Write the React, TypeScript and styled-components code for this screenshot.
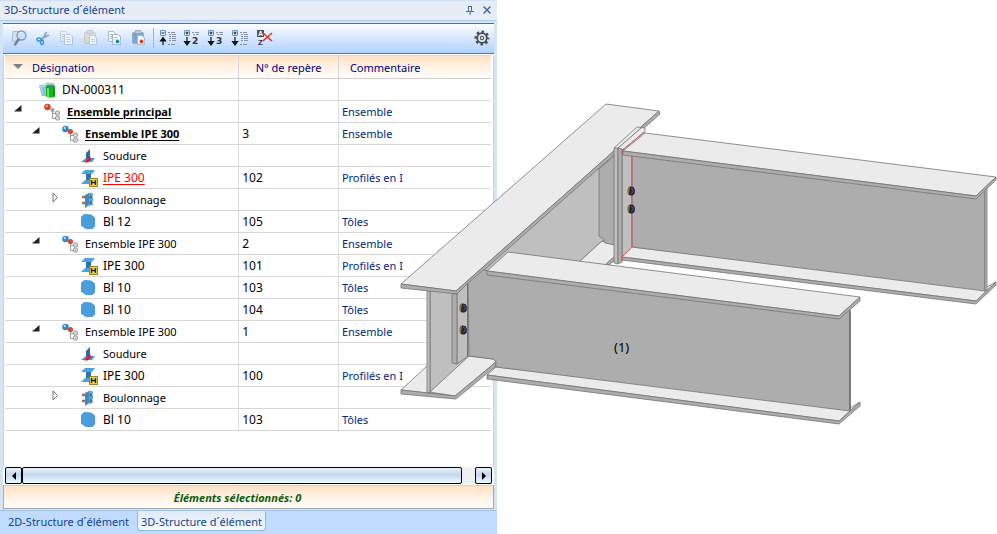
import React from "react";
import styled, { createGlobalStyle } from "styled-components";

const GlobalStyle = createGlobalStyle`
  * { box-sizing: border-box; }
  body {
    margin: 0;
    background: #fff;
    font-family: "Noto Sans", "Open Sans", sans-serif;
    font-size: 11px;
    line-height: 16px;
    color: #000;
  }
  button { font: inherit; padding: 0; margin: 0; border: 0; background: none; color: inherit; }
  svg { display: block; }
`;

const Page = styled.main`
  display: grid;
  grid-template-columns: minmax(0, 497fr) minmax(0, 500fr);
  min-height: 100vh;
`;

const Dock = styled.section`
  display: flex;
  flex-direction: column;
  background: #bfdbff;
`;

const Panel = styled.div`
  flex: 1;
  display: flex;
  flex-direction: column;
  background: #d5e4f5;
  border-bottom: 1px solid #a3c3e8;
  padding-bottom: 1px;
`;

const TitleBar = styled.header`
  display: flex;
  align-items: center;
  gap: 7px;
  height: 21px;
  padding: 0 5px 1px 4px;
  background: #e6edf6;
  border-top: 1px solid #cfe0f5;
  border-bottom: 1px solid #aecbee;
`;

const Title = styled.h1`
  flex: 1;
  margin: 0;
  font: inherit;
  color: #15428b;
`;

const Frame = styled.div`
  flex: 1;
  display: flex;
  flex-direction: column;
  margin: 2px 3px 0;
  background: #fff;
`;

const Toolbar = styled.div`
  display: flex;
  align-items: center;
  height: 31px;
  padding: 0 0 2px 4px;
  border-top: 1px solid #6b6b6b;
  border-bottom: 1px solid #3d7fb5;
  background: linear-gradient(#fbfdff, #d6e7ff 50%, #b0d2ff);
`;

const ToolButton = styled.button<{ $last?: boolean; $faded?: boolean }>`
  display: grid;
  place-items: center;
  width: 24px;
  height: 24px;
  margin-left: ${(p) => (p.$last ? "auto" : "0")};
  opacity: ${(p) => (p.$faded ? 0.6 : 1)};
`;

const Separator = styled.span`
  width: 1px;
  height: 20px;
  margin: 0 2px;
  background: #9db4d4;
`;

const TreeArea = styled.div`
  flex: 1;
  margin-top: 1px;
  padding: 0 2px 0 1px;
  border-left: 1px solid #b9d7f0;
  border-right: 1px solid #b9d7f0;
`;

const Tree = styled.table`
  width: 100%;
  border-collapse: separate;
  border-spacing: 0;
  table-layout: fixed;
`;

const HeadCell = styled.th<{ $inset?: number }>`
  height: 24px;
  padding: 1px 0 0 ${(p) => p.$inset ?? 0}px;
  font-weight: 400;
  text-align: ${(p) => (p.$inset ? "left" : "center")};
  color: #00007b;
  background: linear-gradient(#ffe1c4, #fff3e6 55%, #fffdfa);
  border-top: 1px solid #d8d8d8;
  border-bottom: 1px solid #d0d0d0;
  &:not(:last-child) { border-right: 1px solid #d8d8d8; }
`;

const HeadLabel = styled.span`
  display: flex;
  align-items: center;
  gap: 9px;
`;

const Cell = styled.td<{ $navy?: boolean; $mark?: boolean }>`
  height: 22px;
  padding: 1px 0 0 3px;
  white-space: nowrap;
  font-size: ${(p) => (p.$mark ? "12px" : "11px")};
  color: ${(p) => (p.$navy ? "#00287b" : "#000")};
  border-bottom: 1px solid #d6d6d6;
  &:not(:last-child) { border-right: 1px solid #dcdcdc; }
`;

const Node = styled.div<{ $indent: number }>`
  display: flex;
  align-items: center;
  padding-left: ${(p) => p.$indent}px;
`;

const ToggleSlot = styled.span`
  width: 30px;
  height: 20px;
`;

const Toggle = styled.button`
  display: block;
  width: 10px;
  height: 16px;
`;

const IconSlot = styled.span`
  width: 23px;
`;

type Tone = "plain" | "strong" | "alert";
const NodeName = styled.span<{ $tone: Tone; $code: boolean }>`
  font-family: ${(p) => (p.$tone === "strong" ? '"Open Sans"' : '"Noto Sans"')}, sans-serif;
  font-size: ${(p) => (p.$code ? "12px" : "11px")};
  font-weight: ${(p) => (p.$tone === "strong" ? 700 : 400)};
  color: ${(p) => (p.$tone === "alert" ? "#f00" : "inherit")};
  text-decoration: ${(p) => (p.$tone === "plain" ? "none" : "underline")};
  text-underline-offset: 2px;
`;

const ScrollBar = styled.div`
  display: flex;
  height: 17px;
  margin: 0 2px 1px;
  background: #efefef;
`;

const ScrollPart = styled.button`
  display: grid;
  place-items: center;
  flex: 0 0 17px;
  height: 17px;
  border: 1px solid #000;
  border-radius: 2px;
  background: linear-gradient(#e9f1fb, #c3d6ee 45%, #dcebfa 75%, #e9fbff);
`;

const ScrollThumb = styled(ScrollPart)`
  flex: 1;
  margin-right: 13px;
`;

const Status = styled.footer`
  height: 24px;
  padding: 4px 22px 0 0;
  border: 1px solid #a8a8a8;
  border-top-color: #b5d6ea;
  background: linear-gradient(#ffe1c4, #fff3e6 55%, #fffdfa);
  font-family: "Open Sans", sans-serif;
  font-weight: 700;
  font-style: italic;
  text-align: center;
  color: #0a5c0a;
`;

const Tabs = styled.nav`
  display: flex;
  align-items: flex-start;
  gap: 4px;
  height: 23px;
  padding-left: 4px;
`;

const Tab = styled.button<{ $active?: boolean }>`
  height: 20px;
  padding: 2px 3px 0;
  color: #15428b;
  white-space: nowrap;
  border: 1px solid ${(p) => (p.$active ? "#8fb8e8" : "transparent")};
  border-top: 0;
  border-radius: 0 0 4px 4px;
  background: ${(p) => (p.$active ? "linear-gradient(#dfeaf7, #f6faff)" : "none")};
`;

const Viewer = styled.section`
  position: relative;
`;

const Model = styled.svg`
  position: absolute;
  top: 0;
  right: 0;
  width: 119.4%;
  height: auto;
  pointer-events: none;
  font-size: 13px;
`;

const Svg = ({ w = 18, h = 18, children }: { w?: number; h?: number; children: React.ReactNode }) => (
  <svg width={w} height={h} viewBox={`0 0 ${w} ${h}`} aria-hidden="true">{children}</svg>
);

/* Toolbar icons */

const FindIcon = () => (
  <Svg>
    <path d="M3 2.500h6.500v8.500L2 12.500z" fill="#d3e0f2" stroke="#a9bbd4" />
    <circle cx="11.500" cy="6.500" r="4.500" fill="#c4dcf8" fillOpacity=".85" stroke="#8298ba" strokeWidth="1.300" />
    <path d="M9 5.500a3 3 0 0 1 3-2.500" fill="none" stroke="#fff" />
    <path d="M8.500 10.500L5 15.500" stroke="#74829c" strokeWidth="2.600" strokeLinecap="round" />
  </Svg>
);

const CutIcon = () => (
  <Svg>
    <path d="M12.500 3L7.500 12M15 6L6 10.500" stroke="#8fa6bd" strokeWidth="1.800" />
    <ellipse cx="5" cy="10.500" rx="2" ry="1.500" fill="none" stroke="#3d9ad6" strokeWidth="1.600" />
    <ellipse cx="8" cy="13.500" rx="1.500" ry="2" fill="none" stroke="#3d9ad6" strokeWidth="1.600" />
  </Svg>
);

const Sheets = () => (
  <>
    <path d="M2.500 2.500h5l2 2v8h-7z" fill="#f3f8fd" stroke="#a9bbd0" />
    <path d="M6.500 5.500h5.500l2.500 2.500v7.500h-8z" fill="#fff" stroke="#9db0c6" />
    <path d="M8.500 8.500h3M8.500 10.500h4M8.500 12.500h4M4 5.500h2M4 7.500h2M4 9.500h2" stroke="#a3b7cd" />
  </>
);
const CopyIcon = () => <Svg><Sheets /></Svg>;
const CopySpecialIcon = () => (
  <Svg><Sheets /><circle cx="11.500" cy="12.500" r="2.500" fill="#1e8fc4" stroke="#fff" /></Svg>
);

const Board = ({ back }: { back: string }) => (
  <>
    <rect x="2.500" y="3.500" width="11" height="11" rx="1" fill={back} stroke="#8d9db3" strokeOpacity=".6" />
    <rect x="5" y="1.500" width="6" height="3" rx="1" fill="#c4cbd3" stroke="#8e98a5" strokeWidth=".7" />
    <path d="M7.500 6.500h4.500l2.500 2.500v6.500h-7z" fill="#fff" stroke="#a5b4c6" />
  </>
);
const PasteIcon = () => (
  <Svg><Board back="#e2d2ab" /><path d="M9 10.500h4M9 12.500h4" stroke="#b9c4d2" /></Svg>
);
const PasteSpecialIcon = () => (
  <Svg><Board back="#72a6da" /><circle cx="11.500" cy="12.500" r="2.500" fill="#d8401f" stroke="#fff" /></Svg>
);

const LevelIcon = ({ sign, up, level }: { sign: "+" | "-"; up?: boolean; level?: string }) => (
  <Svg>
    <rect x="1.500" y="1.500" width="5" height="5" rx=".5" fill="#eaf5ff" stroke="#5795cf" />
    <path d={sign === "+" ? "M2.500 4h3M4 2.500v3" : "M2.500 4h3"} stroke="#111" />
    {up ? (
      <path d="M4 16v-5M1.500 12L4 8.500 6.500 12z" stroke="#111" fill="#111" strokeWidth="1.200" />
    ) : (
      <path d="M4 8v5M1.500 12.500L4 16l2.500-3.500z" stroke="#111" fill="#111" strokeWidth="1.200" />
    )}
    <path
      d={level ? "M9 3.500h2M10 5.500h2M12 3.500h4M13 5.500h3" : "M9 3.500h2M12 3.500h4M10 5.500h2M13 5.500h4M10 7.500h2M13 7.500h4M10 9.500h2M13 9.500h4M10 11.500h2M13 11.500h4M9 15.500h2M12 15.500h4"}
      stroke="#8194aa"
    />
    {level && (
      <text x="9" y="15" fontSize="9" fontWeight="700" fontFamily="DejaVu Sans, sans-serif" fill="#333">{level}</text>
    )}
  </Svg>
);

const SortClearIcon = () => (
  <Svg>
    <rect x="2" y="1" width="7" height="7" fill="#505050" />
    <text x="3" y="7" fontSize="7" fontWeight="700" fontFamily="Liberation Sans, sans-serif" fill="#fff">A</text>
    <text x="3" y="16" fontSize="8" fontWeight="700" fontFamily="Liberation Sans, sans-serif" fill="#333">Z</text>
    <path d="M8 4l9 8M17 4l-9 8" stroke="#d63a2a" strokeWidth="1.600" />
  </Svg>
);

const GearIcon = () => (
  <Svg>
    <circle cx="9" cy="9" r="6.300" fill="none" stroke="#4a4a4a" strokeWidth="2.400" strokeDasharray="2.470 2.478" strokeDashoffset="1.230" />
    <circle cx="9" cy="9" r="4.800" fill="#dbe9fb" stroke="#4a4a4a" strokeWidth="1.800" />
    <circle cx="9" cy="9" r="1.600" fill="#fff" stroke="#5a5a5a" strokeWidth="1.200" />
  </Svg>
);

/* Tree icons */

const ProjectIcon = () => (
  <Svg>
    <path d="M.5 4.500l5-.5 2-2 7 .5v12H3z" fill="#b9dcee" stroke="#7fb4cf" strokeWidth=".8" />
    <path d="M2.500 6l9-1v10H4z" fill="#8dc0da" />
    <path d="M7 5.500v9.500c0 2 9 2 9 0V5.500z" fill="#14b81a" />
    <path d="M9 7v9" stroke="#7ff07c" strokeWidth="1.500" />
    <path d="M15 6.500v9" stroke="#0b8b12" strokeWidth="1.500" />
    <ellipse cx="11.500" cy="5.500" rx="4.500" ry="1.500" fill="#3a9e55" stroke="#128d18" strokeWidth=".6" />
  </Svg>
);

const Branch = () => (
  <>
    <path d="M8.500 8v7.500H12M8.500 10.500H12" fill="none" stroke="#9a9a9a" />
    <circle cx="13.500" cy="10" r="2.200" fill="#d7d7d7" stroke="#939393" strokeWidth=".9" />
    <circle cx="13.500" cy="15" r="2.200" fill="#d7d7d7" stroke="#939393" strokeWidth=".9" />
  </>
);
const MainAssemblyIcon = () => (
  <Svg>
    <Branch />
    <circle cx="3.500" cy="4" r="3.300" fill="#cf4732" />
    <circle cx="2.800" cy="3" r="1.200" fill="#eda08f" />
    <circle cx="8.500" cy="7" r="2" fill="#9b9b9b" />
  </Svg>
);
const AssemblyIcon = () => (
  <Svg>
    <Branch />
    <circle cx="3.500" cy="4" r="3.300" fill="#2f87c8" />
    <circle cx="2.800" cy="3" r="1.200" fill="#a8d6f4" />
    <circle cx="8.500" cy="6.500" r="2.600" fill="#d14d38" />
  </Svg>
);
const WeldIcon = () => (
  <Svg>
    <path d="M1 15l5-4h9l-3 4z" fill="#4695d3" />
    <path d="M6 12V6l4-4v9z" fill="#2b6ca5" />
    <path d="M10 8.500l1 4L7.500 15.500H4.500z" fill="#e5182b" />
  </Svg>
);
const ProfileIcon = () => (
  <Svg>
    <path d="M6 4h5v9H6z" fill="#2d71aa" />
    <path d="M1 5l4-4h10l-3 4z" fill="#4da3dd" />
    <path d="M1 15l4-4h8l-2 4z" fill="#4da3dd" />
    <rect x="9.500" y="9.500" width="8" height="8" fill="#f3cf32" stroke="#9b832a" />
    <path d="M11.500 11v5M15.500 11v5M11.500 13.500h4" stroke="#222" strokeWidth="1.300" />
  </Svg>
);
const BoltIcon = () => (
  <Svg>
    <path d="M2 6h3M2 12h3" stroke="#a36f5d" strokeWidth="2.600" />
    <path d="M5 4l4-2v12l-4 3z" fill="#3c88c4" />
    <path d="M9 1.500l4 1v11l-4 2z" fill="#5aa6dc" />
    <path d="M10 6h2M10 11.500h2" stroke="#3c5268" strokeWidth="2" />
    <circle cx="12.500" cy="5.500" r=".8" fill="#e5edf4" />
    <circle cx="12.500" cy="11" r=".8" fill="#e5edf4" />
  </Svg>
);
const PlateIcon = () => (
  <Svg>
    <path d="M4 1.500l7 .5 3.500 2.500v9L12.500 15.500H6l-4.500-3V4z" fill="#4a9cda" stroke="#4a9cda" strokeLinejoin="round" />
  </Svg>
);

const OpenMark = () => (
  <Svg w={10} h={16}><path d="M0 9.500h7.500V3z" fill="#222" /></Svg>
);
const ClosedMark = () => (
  <Svg w={10} h={16}><path d="M3 3l4.500 4.500L3 12z" fill="#fff" stroke="#777" /></Svg>
);

type Kind = "project" | "main" | "assembly" | "weld" | "profile" | "bolt" | "plate";
const icons: Record<Kind, () => React.JSX.Element> = {
  project: ProjectIcon,
  main: MainAssemblyIcon,
  assembly: AssemblyIcon,
  weld: WeldIcon,
  profile: ProfileIcon,
  bolt: BoltIcon,
  plate: PlateIcon,
};

const indents: Record<Kind, number> = { project: 1, main: 6, assembly: 24, weld: 42, profile: 42, bolt: 42, plate: 42 };
const codeKinds: Kind[] = ["project", "profile", "plate"];

interface Row {
  kind: Kind;
  name: string;
  mark?: string;
  note?: string;
  tone?: Tone;
}

const rows: Row[] = [
  { kind: "project", name: "DN-000311" },
  { kind: "main", name: "Ensemble principal", note: "Ensemble", tone: "strong" },
  { kind: "assembly", name: "Ensemble IPE 300", mark: "3", note: "Ensemble", tone: "strong" },
  { kind: "weld", name: "Soudure" },
  { kind: "profile", name: "IPE 300", mark: "102", note: "Profilés en I", tone: "alert" },
  { kind: "bolt", name: "Boulonnage" },
  { kind: "plate", name: "Bl 12", mark: "105", note: "Tôles" },
  { kind: "assembly", name: "Ensemble IPE 300", mark: "2", note: "Ensemble" },
  { kind: "profile", name: "IPE 300", mark: "101", note: "Profilés en I" },
  { kind: "plate", name: "Bl 10", mark: "103", note: "Tôles" },
  { kind: "plate", name: "Bl 10", mark: "104", note: "Tôles" },
  { kind: "assembly", name: "Ensemble IPE 300", mark: "1", note: "Ensemble" },
  { kind: "weld", name: "Soudure" },
  { kind: "profile", name: "IPE 300", mark: "100", note: "Profilés en I" },
  { kind: "bolt", name: "Boulonnage" },
  { kind: "plate", name: "Bl 10", mark: "103", note: "Tôles" },
];

const TreeRow = ({ row }: { row: Row }) => {
  const Icon = icons[row.kind];
  const open = row.kind === "main" || row.kind === "assembly";
  return (
    <tr>
      <Cell>
        <Node $indent={indents[row.kind]}>
          <ToggleSlot>
            {(open || row.kind === "bolt") && (
              <Toggle aria-label={open ? "Réduire" : "Développer"} aria-expanded={open}>
                {open ? <OpenMark /> : <ClosedMark />}
              </Toggle>
            )}
          </ToggleSlot>
          <IconSlot><Icon /></IconSlot>
          <NodeName $tone={row.tone ?? "plain"} $code={codeKinds.includes(row.kind)}>{row.name}</NodeName>
        </Node>
      </Cell>
      <Cell $mark>{row.mark}</Cell>
      <Cell $navy>{row.note}</Cell>
    </tr>
  );
};

/* Beam model */

const LIGHT = "#ebebeb";
const MID = "#bfbfbf";
const DARK = "#adadad";
const EDGE = "#adadad";

const Face = ({ p, fill }: { p: string; fill: string }) => (
  <polygon points={p} fill={fill} stroke="#757575" strokeWidth=".8" strokeLinejoin="round" />
);

const Bolt = ({ x, y }: { x: number; y: number }) => (
  <g transform={`translate(${x} ${y})`}>
    <ellipse cx="-1" cy="0" rx="2.600" ry="4.600" fill="#857432" />
    <path d="M-1-4.500l3.500.5 1.500 3-.5 4-2.500 1.800-3-1z" fill="#27213e" />
    <path d="M0-2.500l2 .5v3l-2 1.500" fill="none" stroke="#5b5280" />
  </g>
);

const BeamModel = () => (
  <Model viewBox="400 0 597 534" role="img" aria-label="Modèle 3D de l'ensemble">
    <Face fill={LIGHT} p="401,390 427,366 440,366 469,356 493,359 496,362 455,396" />
    <Face fill={MID} p="430,291 615,151 615,245 602,241 579,262 430,392" />
    <Face fill={MID} p="427,291 430,291 430,393 427,392" />
    <Face fill={LIGHT} p="430,392 469,356 493,359 496,362 455,396" />
    <Face fill={EDGE} p="401,390 455,396 496,362 496,366 456,399 401,394" />
    <Face fill={LIGHT} p="602,241 615,245 615,256 605,265 579,262" />
    <Face fill={EDGE} p="605,265 615,256 615,260 609,265" />
    <Face fill={DARK} p="599,169 615,155 615,245 605,243 603,239 599,236" />

    <Face fill={LIGHT} p="632,247 985,288 996,282 976,301 622,257" />
    <Face fill={EDGE} p="622,257 976,301 996,282 996,285 976,304 622,260" />
    <Face fill={MID} p="622,150 632,150 632,247 622,257" />
    <Face fill={DARK} p="632,153 985,190 985,291 632,247" />
    <Face fill={MID} p="985,190 987,188 987,290 985,291" />
    <Face fill={LIGHT} p="623,151 645,133 996,177 976,196" />
    <Face fill={EDGE} p="623,151 976,196 996,177 996,180 976,199 623,155" />

    <Face fill={LIGHT} p="606,104 659,111 456,291 401,284" />
    <Face fill={EDGE} p="401,284 456,291 659,111 660,114 457,294 401,288" />
    <Face fill={LIGHT} p="614,148 637,127 645,128 645,132 622,150" />
    <path d="M618 148L641 128" stroke="#757575" />
    <Face fill={MID} p="614,148 618,148 618,264 614,263" />
    <Face fill={EDGE} p="618,148 622,149 622,262 618,264" />
    <path d="M622 154v-3l22-19M632 156v91l-10 10v4" fill="none" stroke="#dc5a5a" />
    <Bolt x={631} y={191} />
    <Bolt x={631} y={209} />

    <Face fill={MID} p="457,294 468,283 468,356 457,364" />
    <Face fill={EDGE} p="452,294 457,294 457,364 452,363" />
    <Face fill={LIGHT} p="487,375 496,367 850,408 860,402 839,421" />
    <Face fill={EDGE} p="487,375 839,421 860,402 860,406 839,424 487,379" />
    <Face fill={DARK} p="468,283 483,270 850,312 850,411 496,367 496,362 493,359 469,356" />
    <path d="M850 310v100" stroke="#686868" strokeWidth="1.500" />
    <Face fill={LIGHT} p="487,271 508,252 860,297 839,316" />
    <Face fill={EDGE} p="487,271 839,316 860,297 860,301 839,319 487,275" />
    <path d="M467.500 284v72" stroke="#d04a4a" />
    <Bolt x={463} y={308} />
    <Bolt x={463} y={330} />
    <text x="614" y="352" fill="#000">(1)</text>
  </Model>
);

const App = () => (
  <>
    <GlobalStyle />
    <Page>
      <Dock>
        <Panel>
          <TitleBar>
            <Title>3D-Structure d´élément</Title>
            <button aria-label="Épingler">
              <Svg w={10} h={10}>
                <path d="M3.500 1v5M3 1.500h4M6.500 1v5M1 6.500h8M5 7v3" fill="none" stroke="#416bab" />
                <path d="M6 1h1v5H6z" fill="#416bab" />
              </Svg>
            </button>
            <button aria-label="Fermer">
              <Svg w={10} h={10}><path d="M1.500 1.500l7 7M8.500 1.500l-7 7" stroke="#416bab" strokeWidth="1.500" /></Svg>
            </button>
          </TitleBar>
          <Frame>
            <Toolbar role="toolbar">
              <ToolButton aria-label="Rechercher"><FindIcon /></ToolButton>
              <ToolButton aria-label="Couper"><CutIcon /></ToolButton>
              <ToolButton aria-label="Copier" $faded><CopyIcon /></ToolButton>
              <ToolButton aria-label="Coller" $faded><PasteIcon /></ToolButton>
              <ToolButton aria-label="Copie spéciale"><CopySpecialIcon /></ToolButton>
              <ToolButton aria-label="Collage spécial"><PasteSpecialIcon /></ToolButton>
              <Separator />
              <ToolButton aria-label="Tout réduire"><LevelIcon sign="-" up /></ToolButton>
              <ToolButton aria-label="Niveau 2"><LevelIcon sign="+" level="2" /></ToolButton>
              <ToolButton aria-label="Niveau 3"><LevelIcon sign="+" level="3" /></ToolButton>
              <ToolButton aria-label="Tout développer"><LevelIcon sign="+" /></ToolButton>
              <ToolButton aria-label="Annuler le tri"><SortClearIcon /></ToolButton>
              <ToolButton aria-label="Paramètres" $last><GearIcon /></ToolButton>
            </Toolbar>
            <TreeArea>
              <Tree>
                <colgroup>
                  <col width="48.2%" />
                  <col width="20.5%" />
                  <col />
                </colgroup>
                <thead>
                  <tr>
                    <HeadCell $inset={8}>
                      <HeadLabel>
                        <Svg w={10} h={8}><path d="M0 0h10L5 5z" fill="#808080" /></Svg>
                        Désignation
                      </HeadLabel>
                    </HeadCell>
                    <HeadCell>N° de repère</HeadCell>
                    <HeadCell $inset={11}>Commentaire</HeadCell>
                  </tr>
                </thead>
                <tbody>
                  {rows.map((row, i) => <TreeRow key={i} row={row} />)}
                </tbody>
              </Tree>
            </TreeArea>
            <ScrollBar>
              <ScrollPart aria-label="Défiler à gauche"><Svg w={6} h={8}><path d="M5 0v8L1 4z" fill="#000" /></Svg></ScrollPart>
              <ScrollThumb aria-label="Barre de défilement" />
              <ScrollPart aria-label="Défiler à droite"><Svg w={6} h={8}><path d="M1 0v8l4-4z" fill="#000" /></Svg></ScrollPart>
            </ScrollBar>
            <Status>Éléments sélectionnés: 0</Status>
          </Frame>
        </Panel>
        <Tabs>
          <Tab>2D-Structure d´élément</Tab>
          <Tab $active>3D-Structure d´élément</Tab>
        </Tabs>
      </Dock>
      <Viewer><BeamModel /></Viewer>
    </Page>
  </>
);

export default App;
